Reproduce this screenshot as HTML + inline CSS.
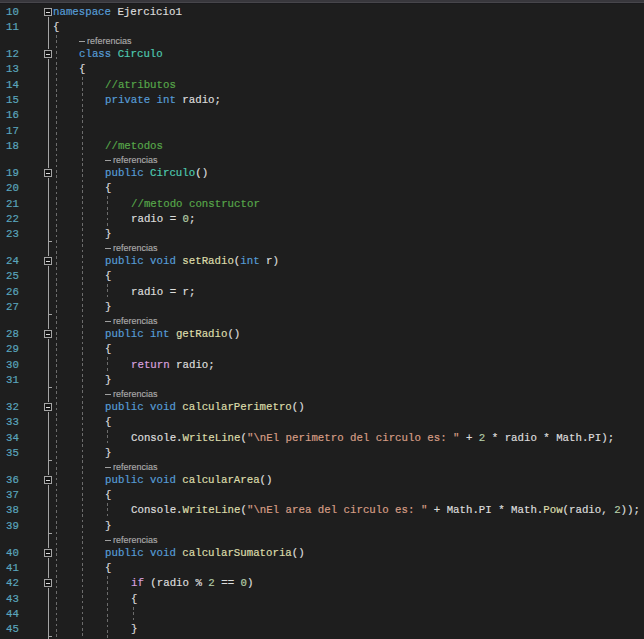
<!DOCTYPE html><html><head><meta charset="utf-8"><style>
html,body{margin:0;padding:0;background:#1e1e1e;width:644px;height:639px;overflow:hidden;position:relative}
.c{position:absolute;transform-origin:0 0;transform:scaleX(0.9333);left:53.40px;white-space:pre;font-family:"Liberation Mono",monospace;font-size:11.50px;letter-spacing:0.000px;line-height:15px;height:15px;color:#dcdcdc;-webkit-text-stroke:0.2px currentColor}
.n{position:absolute;left:0;width:19.00px;text-align:right;transform-origin:100% 0;transform:scaleX(0.9333);white-space:pre;font-family:"Liberation Mono",monospace;font-size:11.50px;letter-spacing:0.000px;line-height:15px;height:15px;color:#5aa5bd;-webkit-text-stroke:0.2px #5aa5bd}
.r{position:absolute;white-space:pre;font-family:"Liberation Sans",sans-serif;font-size:8.5px;line-height:12px;height:12px;color:#aaaaaa;transform-origin:0 0;transform:scaleX(1.055);-webkit-text-stroke:0.15px #aaaaaa}
.rd{position:absolute;width:6px;height:1px;background:#a0a0a0}
.v{position:absolute;width:1px;background:#a5a5a5}
.h{position:absolute;height:1px;background:#a5a5a5}
.b{position:absolute;width:6px;height:6px;border:1px solid #a5a5a5;background:#141414;box-shadow:0 0 0 1px #1e1e1e}
.b:after{content:"";position:absolute;left:1px;top:3px;width:4px;height:1px;background:#dcdcdc}
.g{position:absolute;width:1px;background:repeating-linear-gradient(to bottom,#6c6c6c 0,#6c6c6c 2.7px,transparent 2.7px,transparent 5.4px)}
</style></head><body>
<div style="position:absolute;left:0;top:0;width:644px;height:2px;background:#38373c"></div>
<div style="position:absolute;left:0;top:2px;width:644px;height:1px;background:#47464b"></div>
<div style="position:absolute;left:0;top:3px;width:644px;height:1px;background:#1a1a1d"></div>

<div class="n" style="top:3.80px">10</div>
<div class="c" style="top:3.80px;left:53.40px"><span style="color:#569cd6">namespace</span> Ejercicio1</div>
<div class="n" style="top:19.10px">11</div>
<div class="c" style="top:19.10px;left:53.40px">{</div>
<div class="n" style="top:46.10px">12</div>
<div class="c" style="top:46.10px;left:79.16px"><span style="color:#569cd6">class</span> <span style="color:#4ec9b0">Circulo</span></div>
<div class="n" style="top:61.40px">13</div>
<div class="c" style="top:61.40px;left:79.16px">{</div>
<div class="n" style="top:76.70px">14</div>
<div class="c" style="top:76.70px;left:104.92px"><span style="color:#57a64a">//atributos</span></div>
<div class="n" style="top:92.00px">15</div>
<div class="c" style="top:92.00px;left:104.92px"><span style="color:#569cd6">private</span> <span style="color:#569cd6">int</span> radio;</div>
<div class="n" style="top:107.30px">16</div>
<div class="n" style="top:122.60px">17</div>
<div class="n" style="top:137.90px">18</div>
<div class="c" style="top:137.90px;left:104.92px"><span style="color:#57a64a">//metodos</span></div>
<div class="n" style="top:164.90px">19</div>
<div class="c" style="top:164.90px;left:104.92px"><span style="color:#569cd6">public</span> <span style="color:#4ec9b0">Circulo</span>()</div>
<div class="n" style="top:180.20px">20</div>
<div class="c" style="top:180.20px;left:104.92px">{</div>
<div class="n" style="top:195.50px">21</div>
<div class="c" style="top:195.50px;left:130.68px"><span style="color:#57a64a">//metodo constructor</span></div>
<div class="n" style="top:210.80px">22</div>
<div class="c" style="top:210.80px;left:130.68px">radio = <span style="color:#b5cea8">0</span>;</div>
<div class="n" style="top:226.10px">23</div>
<div class="c" style="top:226.10px;left:104.92px">}</div>
<div class="n" style="top:253.10px">24</div>
<div class="c" style="top:253.10px;left:104.92px"><span style="color:#569cd6">public</span> <span style="color:#569cd6">void</span> <span style="color:#dcdcaa">setRadio</span>(<span style="color:#569cd6">int</span> r)</div>
<div class="n" style="top:268.40px">25</div>
<div class="c" style="top:268.40px;left:104.92px">{</div>
<div class="n" style="top:283.70px">26</div>
<div class="c" style="top:283.70px;left:130.68px">radio = r;</div>
<div class="n" style="top:299.00px">27</div>
<div class="c" style="top:299.00px;left:104.92px">}</div>
<div class="n" style="top:326.00px">28</div>
<div class="c" style="top:326.00px;left:104.92px"><span style="color:#569cd6">public</span> <span style="color:#569cd6">int</span> <span style="color:#dcdcaa">getRadio</span>()</div>
<div class="n" style="top:341.30px">29</div>
<div class="c" style="top:341.30px;left:104.92px">{</div>
<div class="n" style="top:356.60px">30</div>
<div class="c" style="top:356.60px;left:130.68px"><span style="color:#d8a0df">return</span> radio;</div>
<div class="n" style="top:371.90px">31</div>
<div class="c" style="top:371.90px;left:104.92px">}</div>
<div class="n" style="top:398.90px">32</div>
<div class="c" style="top:398.90px;left:104.92px"><span style="color:#569cd6">public</span> <span style="color:#569cd6">void</span> <span style="color:#dcdcaa">calcularPerimetro</span>()</div>
<div class="n" style="top:414.20px">33</div>
<div class="c" style="top:414.20px;left:104.92px">{</div>
<div class="n" style="top:429.50px">34</div>
<div class="c" style="top:429.50px;left:130.68px">Console.<span style="color:#dcdcaa">WriteLine</span>(<span style="color:#d69d85">&quot;</span><span style="color:#d69d85">\n</span><span style="color:#d69d85">El perimetro del circulo es: &quot;</span> + <span style="color:#b5cea8">2</span> * radio * Math.PI);</div>
<div class="n" style="top:444.80px">35</div>
<div class="c" style="top:444.80px;left:104.92px">}</div>
<div class="n" style="top:471.80px">36</div>
<div class="c" style="top:471.80px;left:104.92px"><span style="color:#569cd6">public</span> <span style="color:#569cd6">void</span> <span style="color:#dcdcaa">calcularArea</span>()</div>
<div class="n" style="top:487.10px">37</div>
<div class="c" style="top:487.10px;left:104.92px">{</div>
<div class="n" style="top:502.40px">38</div>
<div class="c" style="top:502.40px;left:130.68px">Console.<span style="color:#dcdcaa">WriteLine</span>(<span style="color:#d69d85">&quot;</span><span style="color:#d69d85">\n</span><span style="color:#d69d85">El area del circulo es: &quot;</span> + Math.PI * Math.<span style="color:#dcdcaa">Pow</span>(radio, <span style="color:#b5cea8">2</span>));</div>
<div class="n" style="top:517.70px">39</div>
<div class="c" style="top:517.70px;left:104.92px">}</div>
<div class="n" style="top:544.70px">40</div>
<div class="c" style="top:544.70px;left:104.92px"><span style="color:#569cd6">public</span> <span style="color:#569cd6">void</span> <span style="color:#dcdcaa">calcularSumatoria</span>()</div>
<div class="n" style="top:560.00px">41</div>
<div class="c" style="top:560.00px;left:104.92px">{</div>
<div class="n" style="top:575.30px">42</div>
<div class="c" style="top:575.30px;left:130.68px"><span style="color:#d8a0df">if</span> (radio % <span style="color:#b5cea8">2</span> == <span style="color:#b5cea8">0</span>)</div>
<div class="n" style="top:590.60px">43</div>
<div class="c" style="top:590.60px;left:130.68px">{</div>
<div class="n" style="top:605.90px">44</div>
<div class="n" style="top:621.20px">45</div>
<div class="c" style="top:621.20px;left:130.68px">}</div>
<div class="rd" style="top:41px;left:79px"></div>
<div class="r" style="top:35.00px;left:86.76px">referencias</div>
<div class="rd" style="top:160px;left:105px"></div>
<div class="r" style="top:154.00px;left:112.52px">referencias</div>
<div class="rd" style="top:248px;left:105px"></div>
<div class="r" style="top:242.00px;left:112.52px">referencias</div>
<div class="rd" style="top:321px;left:105px"></div>
<div class="r" style="top:315.00px;left:112.52px">referencias</div>
<div class="rd" style="top:394px;left:105px"></div>
<div class="r" style="top:388.00px;left:112.52px">referencias</div>
<div class="rd" style="top:467px;left:105px"></div>
<div class="r" style="top:461.00px;left:112.52px">referencias</div>
<div class="rd" style="top:540px;left:105px"></div>
<div class="r" style="top:534.00px;left:112.52px">referencias</div>
<div class="v" style="left:48px;top:16px;height:623px"></div>
<div class="h" style="left:48px;top:241px;width:4px"></div>
<div class="h" style="left:48px;top:314px;width:4px"></div>
<div class="h" style="left:48px;top:387px;width:4px"></div>
<div class="h" style="left:48px;top:460px;width:4px"></div>
<div class="h" style="left:48px;top:533px;width:4px"></div>
<div class="h" style="left:48px;top:636px;width:4px"></div>
<div class="b" style="left:44px;top:8px"></div>
<div class="b" style="left:44px;top:50px"></div>
<div class="b" style="left:44px;top:169px"></div>
<div class="b" style="left:44px;top:257px"></div>
<div class="b" style="left:44px;top:330px"></div>
<div class="b" style="left:44px;top:403px"></div>
<div class="b" style="left:44px;top:476px"></div>
<div class="b" style="left:44px;top:549px"></div>
<div class="b" style="left:44px;top:579px"></div>
<div class="g" style="left:56px;top:35px;height:604px"></div>
<div class="g" style="left:82px;top:77px;height:562px"></div>
<div class="g" style="left:107px;top:196px;height:30px"></div>
<div class="g" style="left:107px;top:284px;height:15px"></div>
<div class="g" style="left:107px;top:357px;height:15px"></div>
<div class="g" style="left:107px;top:430px;height:15px"></div>
<div class="g" style="left:107px;top:503px;height:15px"></div>
<div class="g" style="left:107px;top:576px;height:63px"></div>
<div class="g" style="left:133px;top:607px;height:14px"></div>
</body></html>
